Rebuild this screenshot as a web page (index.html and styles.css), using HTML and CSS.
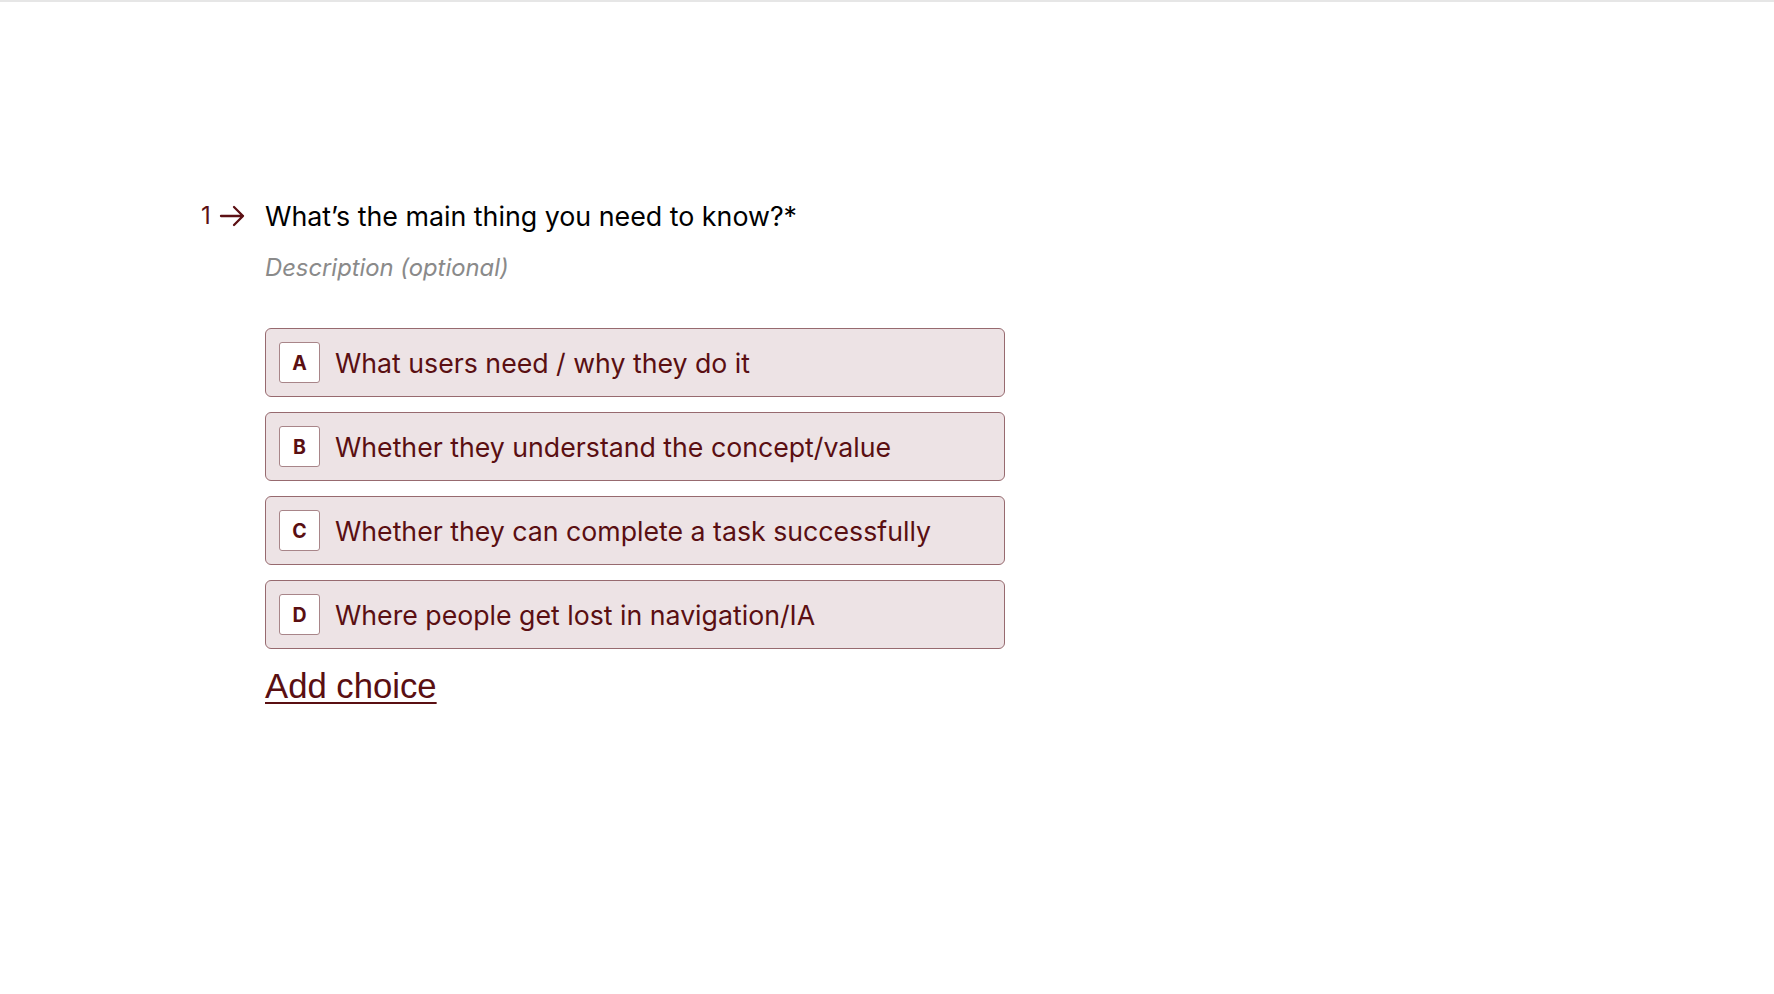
FILE: index.html
```html
<!DOCTYPE html>
<html lang="en">
<head>
<meta charset="utf-8">
<title>Question</title>
<link rel="stylesheet" href="styles.css">
</head>
<body>
<div class="topline"></div>
<main class="page">
  <section class="question">
    <div class="qnum">
      <span class="num">1</span>
      <svg class="arrow" width="27" height="24" viewBox="0 0 27 24" fill="none" stroke="currentColor" stroke-width="2.3" stroke-linecap="round" stroke-linejoin="round"><path d="M2 12h22M15 3l9 9-9 9"/></svg>
    </div>
    <div class="qbody">
      <h1 class="qtitle">What’s the main thing you need to know?*</h1>
      <p class="qdesc">Description (optional)</p>
      <ul class="choices">
        <li class="choice"><span class="key">A</span><span class="label">What users need / why they do it</span></li>
        <li class="choice"><span class="key">B</span><span class="label">Whether they understand the concept/value</span></li>
        <li class="choice"><span class="key">C</span><span class="label">Whether they can complete a task successfully</span></li>
        <li class="choice"><span class="key">D</span><span class="label">Where people get lost in navigation/IA</span></li>
      </ul>
      <a class="add" href="#">Add choice</a>
    </div>
  </section>
</main>
</body>
</html>
```
FILE: styles.css
```css
html, body {
  margin: 0;
  padding: 0;
  background: #ffffff;
}
body {
  font-family: Inter, "Noto Sans", sans-serif;
  color: #000;
}
.topline {
  height: 2px;
  background: #e6e6e6;
}
.page {
  padding: 197px 0 0 201px;
}
.question {
  display: flex;
  align-items: flex-start;
}
.qnum {
  width: 64px;
  display: flex;
  align-items: center;
  gap: 8px;
  color: #5c1014;
  height: 34px;
}
.num {
  font-size: 24px;
  line-height: 34px;
}
.arrow {
  display: block;
}
.qbody {
  display: flex;
  flex-direction: column;
}
.qtitle {
  margin: 0;
  font-size: 26.8px;
  font-weight: 400;
  line-height: 34px;
  color: #000;
}
.qdesc {
  margin: 20px 0 0;
  font-size: 23.8px;
  font-style: italic;
  line-height: 30px;
  color: #8a8a8a;
}
.choices {
  list-style: none;
  margin: 45px 0 0;
  padding: 0;
  display: flex;
  flex-direction: column;
  gap: 15px;
}
.choice {
  width: 740px;
  height: 69px;
  box-sizing: border-box;
  display: flex;
  align-items: center;
  gap: 15px;
  padding: 0 13px;
  background: #ede3e5;
  border: 1.5px solid #976a6f;
  border-radius: 6px;
  color: #5a0f12;
}
.key {
  width: 41px;
  height: 41px;
  box-sizing: border-box;
  display: flex;
  align-items: center;
  justify-content: center;
  background: #ffffff;
  border: 1.5px solid #a88589;
  border-radius: 3px;
  font-size: 19.5px;
  font-weight: 700;
  color: #5a0f12;
}
.label {
  font-size: 26.7px;
  line-height: 34px;
}
.add {
  margin-top: 17px;
  align-self: flex-start;
  font-family: "Liberation Sans", Arial, sans-serif;
  font-size: 34.7px;
  line-height: 40px;
  color: #5a0f12;
  text-decoration: underline;
  text-decoration-thickness: 2px;
  text-underline-offset: 4px;
}
```
